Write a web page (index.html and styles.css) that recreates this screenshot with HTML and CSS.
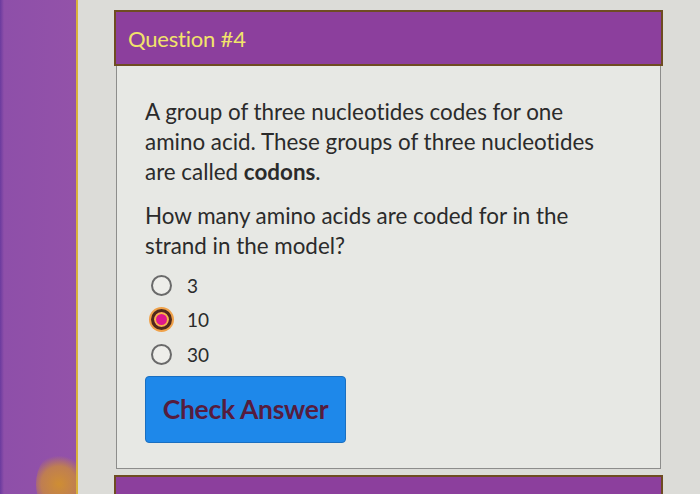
FILE: index.html
```html
<!DOCTYPE html>
<html lang="en">
<head>
  <meta charset="UTF-8" />
  <meta name="viewport" content="width=device-width, initial-scale=1.0" />
  <title>Question #4</title>
  <link rel="stylesheet" href="styles.css">
</head>
<body>

  <aside class="sidebar"></aside>

  <main class="content">
    <section class="question">
      <header class="question-head">
        <h2>Question #4</h2>
      </header>
      <div class="question-body">
        <p>A group of three nucleotides codes for one amino acid. These groups of three nucleotides are called <strong>codons</strong>.</p>
        <p>How many amino acids are coded for in the strand in the model?</p>

        <ul class="options">
          <li class="option"><span class="radio"></span>3</li>
          <li class="option"><span class="radio checked"></span>10</li>
          <li class="option"><span class="radio"></span>30</li>
        </ul>

        <button class="check-btn">Check Answer</button>
      </div>
    </section>

    <section class="question">
      <header class="question-head"></header>
    </section>
  </main>

</body>
</html>
```

FILE: styles.css
```css
/* RESET */
* {
  margin: 0;
  padding: 0;
  box-sizing: border-box;
}

body, html {
  width: 100%;
  height: 100%;
  overflow: hidden;
}

body {
  display: flex;
  background-color: #dcdcd8;
  font-family: Lato, "Open Sans", sans-serif;
  font-variant-ligatures: none;
  color: #2b2b2b;
}

/* SIDEBAR */
.sidebar {
  flex: 0 0 78px;
  background: linear-gradient(90deg, #6a3a9e 0, #8e4fa9 4px, #9352a9 100%);
  border-right: 2px solid #d9b23c;
  position: relative;
  overflow: hidden;
}
.sidebar::after {
  /* warm glow at the foot of the bar */
  content: "";
  position: absolute;
  right: -6px;
  bottom: -22px;
  width: 46px;
  height: 64px;
  border-radius: 50%;
  background: radial-gradient(circle, rgba(210,145,45,0.95) 0, rgba(210,145,45,0.7) 45%, rgba(210,145,45,0) 72%);
}

/* MAIN */
.content {
  flex: 1;
  height: 100%;
  overflow: hidden;
  padding: 10px 0 0 36px;
  display: flex;
  flex-direction: column;
  gap: 6px;
}

.question {
  width: 549px;
  flex-shrink: 0;
}

.question-head {
  height: 56px;
  background-color: #8c3f9d;
  border: 2px solid #6e4c22;
  padding-left: 12px;
  display: flex;
  align-items: center;
}
.question-head h2 {
  font-size: 22px;
  font-weight: 400;
  color: #f2e46a;
  letter-spacing: -0.2px;
}

.question-body {
  background-color: #e7e8e4;
  border: 1px solid #8d8d8b;
  border-top: none;
  margin: 0 2px;
  padding: 31px 20px 25px 28px;
}

.question-body p {
  max-width: 462px;
  font-size: 22.4px;
  line-height: 30px;
  margin-bottom: 14px;
}
.question-body strong {
  font-weight: 700;
}

/* OPTIONS */
.options {
  list-style: none;
  margin-top: -7px;
}
.option {
  display: flex;
  align-items: center;
  gap: 15px;
  height: 34.5px;
  padding-left: 6px;
  font-size: 19px;
}
.radio {
  width: 21px;
  height: 21px;
  border: 2px solid #6a6a6a;
  border-radius: 50%;
  background-color: #eeeeea;
}
.radio.checked {
  border: 3px solid #4e2a1c;
  background-color: #e0188c;
  box-shadow: inset 0 0 0 2px #f4b847, 0 0 0 2px #f0a24a;
}

/* BUTTON */
.check-btn {
  margin-top: 4px;
  width: 201px;
  height: 67px;
  background-color: #1e88ea;
  border: 1px solid #1a6fc0;
  border-radius: 4px;
  font-family: Lato, sans-serif;
  font-size: 26.5px;
  font-weight: 700;
  color: #561c3e;
  letter-spacing: -0.3px;
  cursor: pointer;
}
```
